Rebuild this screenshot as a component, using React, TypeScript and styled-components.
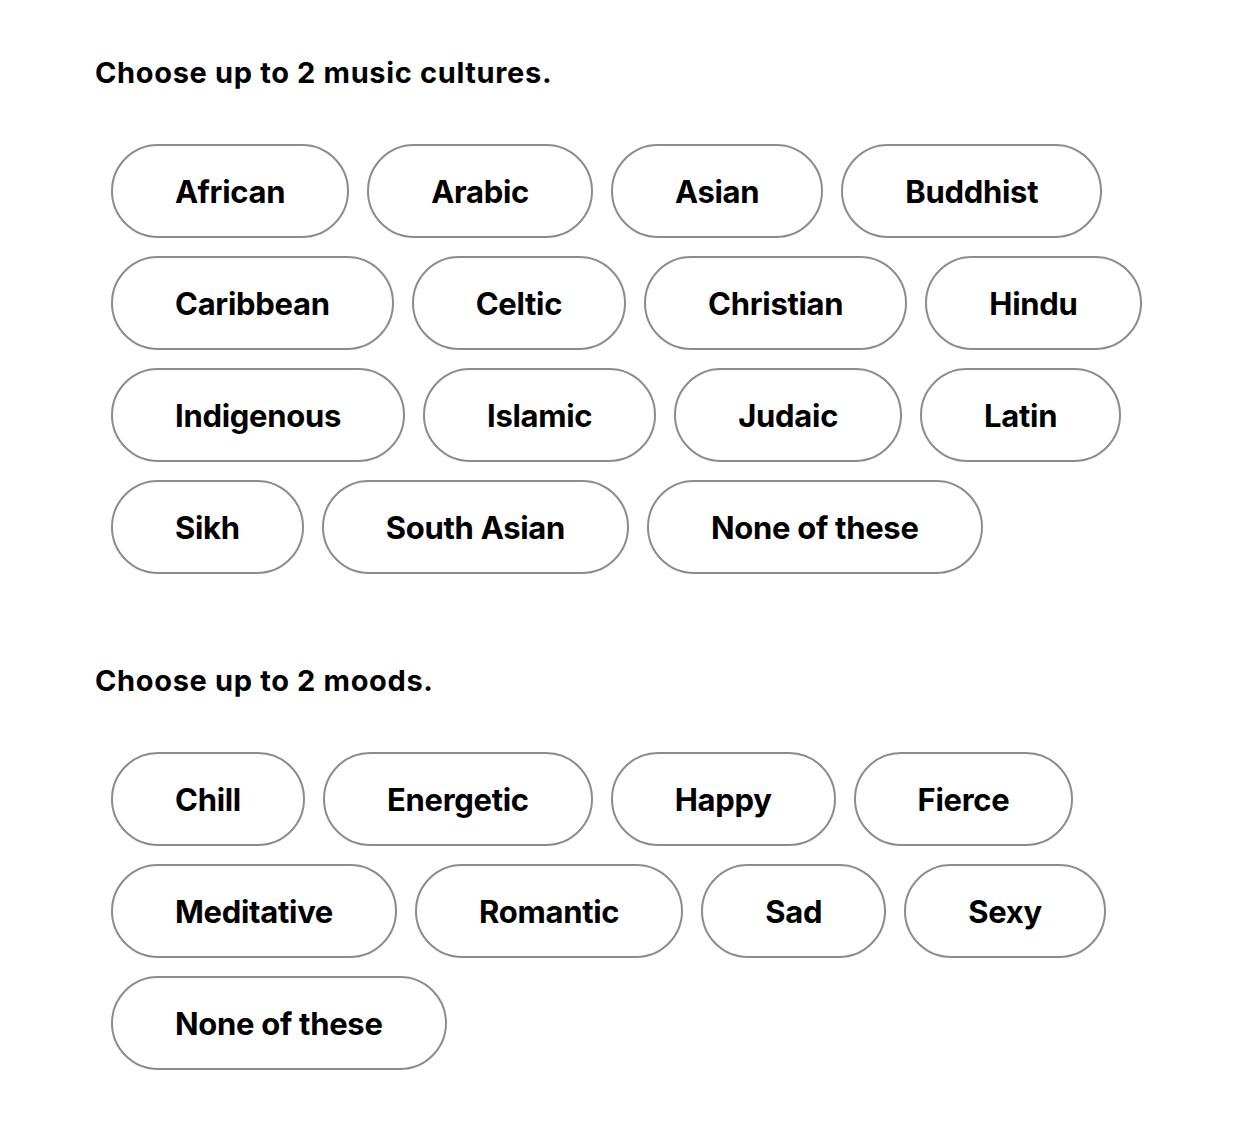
import React from "react";
import styled, { createGlobalStyle } from "styled-components";

const Global = createGlobalStyle`
  html, body { margin: 0; padding: 0; background: #ffffff; }
  body { font-family: Inter, "Noto Sans", Arial, sans-serif; color: #000; }
`;

const Page = styled.main`
  padding: 53px 16px 60px 95px;
  display: flex;
  flex-direction: column;
`;

const Section = styled.section`
  display: flex;
  flex-direction: column;
  & + & { margin-top: 87px; }
`;

const Heading = styled.h2`
  margin: 0;
  font-size: 29px;
  font-weight: 700;
  line-height: 40px;
  letter-spacing: 0.65px;
`;

const PillList = styled.div`
  margin-top: 51px;
  padding-left: 16px;
  max-width: 1120px;
  display: flex;
  flex-wrap: wrap;
  gap: 18px 18px;
`;

const Pill = styled.button`
  box-sizing: border-box;
  height: 94px;
  padding: 0 62px;
  border: 2px solid #8c8c8c;
  border-radius: 47px;
  background: #fff;
  color: #000;
  font-family: Inter, "Noto Sans", Arial, sans-serif;
  font-size: 31px;
  font-weight: 700;
  letter-spacing: -0.3px;
  display: flex;
  align-items: center;
  justify-content: center;
  cursor: pointer;
`;

const cultures = [
  "African", "Arabic", "Asian", "Buddhist",
  "Caribbean", "Celtic", "Christian", "Hindu",
  "Indigenous", "Islamic", "Judaic", "Latin",
  "Sikh", "South Asian", "None of these",
];

const moods = [
  "Chill", "Energetic", "Happy", "Fierce",
  "Meditative", "Romantic", "Sad", "Sexy",
  "None of these",
];

export default function App() {
  return (
    <>
      <Global />
      <Page>
        <Section>
          <Heading>Choose up to 2 music cultures.</Heading>
          <PillList>
            {cultures.map((c) => (
              <Pill key={c}>{c}</Pill>
            ))}
          </PillList>
        </Section>
        <Section>
          <Heading>Choose up to 2 moods.</Heading>
          <PillList>
            {moods.map((m) => (
              <Pill key={m}>{m}</Pill>
            ))}
          </PillList>
        </Section>
      </Page>
    </>
  );
}
